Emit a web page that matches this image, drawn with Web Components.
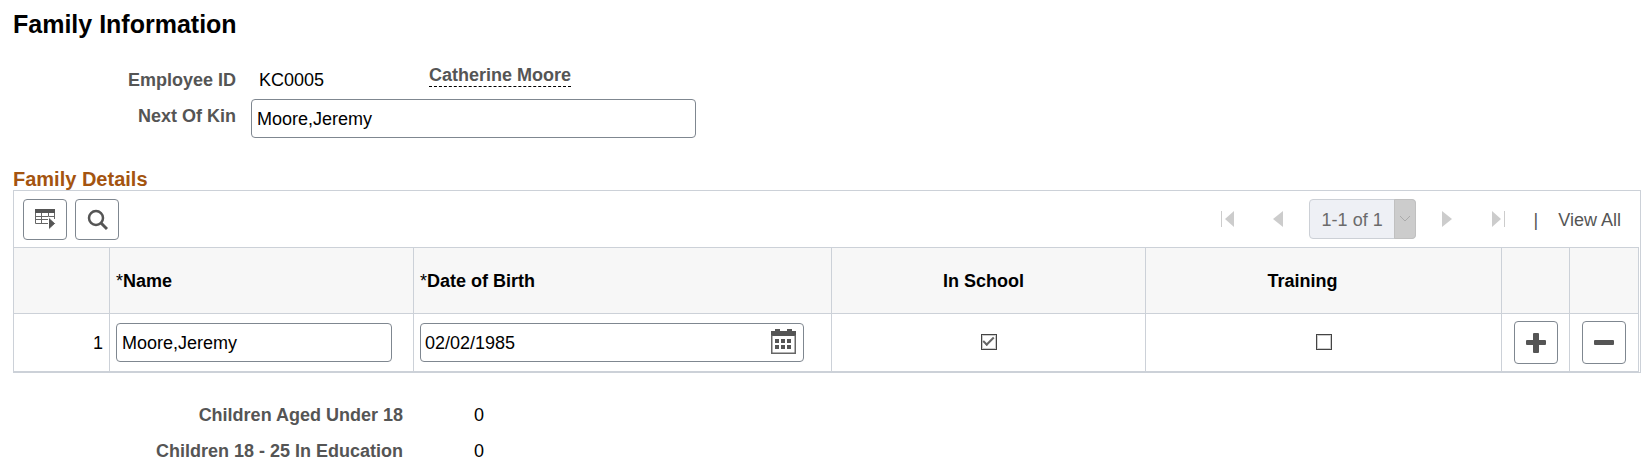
<!DOCTYPE html>
<html lang="en">
<head>
<meta charset="utf-8">
<title>Family Information</title>
<style>
  body {
    margin: 0;
    background: #fff;
    color: #000;
    font: 18px/36px "Liberation Sans", Arial, sans-serif;
  }
</style>
</head>
<body>
<family-page>
  <info-field label="Employee ID" text="KC0005">
    <person-link>Catherine Moore</person-link>
  </info-field>
  <info-field label="Next Of Kin" value="Moore,Jeremy"></info-field>
  <detail-grid slot="details" heading="Family Details">
    <tool-button slot="tools" icon="actions" label="Grid actions"></tool-button>
    <tool-button slot="tools" icon="search" label="Find"></tool-button>
    <grid-pager slot="pager"></grid-pager>
  </detail-grid>
  <info-field slot="totals" class="total" label="Children Aged Under 18" text="0"></info-field>
  <info-field slot="totals" class="total" label="Children 18 - 25 In Education" text="0"></info-field>
</family-page>

<script>
const icons = {
  actions: `<svg width="21" height="21" viewBox="0 0 21 21">
    <path fill="#555" d="M0 0h20v4H0z"/>
    <path fill="none" stroke="#666" d="M.5 4v10.500H14M.5 7.500h19M.5 10.500H14M6.500 4v10M13.500 4v6M19.500 4v6"/>
    <path fill="#555" stroke="#fff" d="M13.500 8l7 6.500-7 6.500z"/>
  </svg>`,
  search: `<svg width="22" height="22" viewBox="0 0 22 22" fill="none" stroke="#555">
    <circle cx="10" cy="9" r="7" stroke-width="2.500"/>
    <path stroke-width="3" d="M15 14l6 6"/>
  </svg>`,
  add: `<svg width="20" height="20" viewBox="0 0 20 20" fill="#555">
    <rect x="0" y="7" width="20" height="5" rx="1"/>
    <rect x="7" y="0" width="6" height="20" rx="1"/>
  </svg>`,
  remove: `<svg width="20" height="20" viewBox="0 0 20 20" fill="#555">
    <rect x="0" y="7" width="20" height="5" rx="1"/>
  </svg>`,
  calendar: `<svg width="25" height="25" viewBox="0 0 25 25">
    <path fill="#555" d="M0 2h4V0h5v2h7V0h5v2h4v5H0z"/>
    <path fill="none" stroke="#666" stroke-width="1.500" d="M.75 6v18.250h23.500V6"/>
    <path fill="#555" d="M4 10h4v4H4zM10 10h4v4h-4zM16 10h4v4h-4zM4 16h4v4H4zM10 16h4v4h-4zM16 16h4v4h-4z"/>
  </svg>`
}

const boxStyle = `
  input[type=text] {
    box-sizing: border-box;
    height: 39px;
    margin: 0;
    padding: 2px 5px 0;
    border: 1px solid #7f8790;
    border-radius: 4px;
    background: #fff;
    color: #000;
    font: inherit;
  }
`

class FamilyPage extends HTMLElement {
  constructor() {
    super()
    this.attachShadow({ mode: 'open' }).innerHTML = `
      <style>
        :host {
          display: block;
          padding: 9px 10px 0 13px;
        }

        h1 {
          margin: 0 0 23px;
          font-size: 25px;
          line-height: 30px;
        }

        .details {
          margin: 30px 0 24px;
        }
      </style>
      <h1>Family Information</h1>
      <section><slot></slot></section>
      <section class="details"><slot name="details"></slot></section>
      <section><slot name="totals"></slot></section>
    `
  }
}

// a label with either plain text or an edit box after it
class InfoField extends HTMLElement {
  constructor() {
    super()
    this.attachShadow({ mode: 'open' }).innerHTML = `
      <style>
        :host {
          display: grid;
          grid-template-columns: 223px 1fr;
          column-gap: 15px;
          min-height: 36px;
        }

        :host(.total) {
          grid-template-columns: 390px 1fr;
          column-gap: 63px;
        }

        label, .label {
          color: #555;
          font-weight: bold;
          text-align: right;
        }

        .content {
          display: flex;
          align-items: flex-start;
        }

        .text {
          width: 170px;
          padding-left: 8px;
        }

        ${boxStyle}

        input[type=text] {
          width: 445px;
          margin-top: 1px;
        }
      </style>
    `
    const name = this.getAttribute('label')
    if (this.hasAttribute('value')) {
      this.shadowRoot.innerHTML += `
        <label for="box">${name}</label>
        <div class="content"><input id="box" type="text" value="${this.getAttribute('value')}"></div>
      `
    } else {
      this.shadowRoot.innerHTML += `
        <span class="label">${name}</span>
        <div class="content"><span class="text">${this.getAttribute('text')}</span><slot></slot></div>
      `
    }
  }
}

class PersonLink extends HTMLElement {
  constructor() {
    super()
    this.attachShadow({ mode: 'open' }).innerHTML = `
      <style>
        :host {
          display: block;
        }

        a {
          display: block;
          padding-top: 2px;
          border-bottom: 1px dashed #000;
          color: #555;
          font-weight: bold;
          line-height: 22px;
          text-decoration: none;
        }
      </style>
      <a href="#"><slot></slot></a>
    `
  }
}

class ToolButton extends HTMLElement {
  constructor() {
    super()
    this.attachShadow({ mode: 'open' }).innerHTML = `
      <style>
        :host {
          display: inline-block;
          vertical-align: top;
          width: 44px;
          height: 41px;
        }

        button {
          display: flex;
          align-items: center;
          justify-content: center;
          box-sizing: border-box;
          width: 100%;
          height: 100%;
          padding: 0;
          border: 1px solid #7f8790;
          border-radius: 4px;
          background: #fff;
          cursor: pointer;
        }
      </style>
      <button type="button" aria-label="${this.getAttribute('label')}">${icons[this.getAttribute('icon')]}</button>
    `
  }
}

class GridPager extends HTMLElement {
  constructor() {
    super()
    this.attachShadow({ mode: 'open' }).innerHTML = `
      <style>
        :host {
          display: flex;
          align-items: center;
          height: 39px;
        }

        button {
          display: flex;
          padding: 0;
          border: 0;
          background: none;
        }

        svg {
          display: block;
          fill: #ccc;
        }

        .previous {
          margin: 0 26px 0 39px;
        }

        .next {
          margin: 0 40px 0 26px;
        }

        .range {
          display: grid;
          grid-template-columns: 85px 22px;
          height: 39px;
        }

        select {
          grid-area: 1 / 1 / 2 / 3;
          appearance: none;
          box-sizing: border-box;
          width: 100%;
          margin: 0;
          padding: 2px 0 0 12px;
          border: 1px solid #ccd0d6;
          border-radius: 4px;
          background: #eef0f5;
          color: #6b6b6b;
          font: inherit;
          opacity: 1;
        }

        .arrow {
          grid-area: 1 / 2;
          display: grid;
          place-items: center;
          border: 1px solid #c0c0c0;
          border-radius: 0 4px 4px 0;
          background: #ccc;
          pointer-events: none;
        }

        .arrow svg {
          fill: none;
          stroke: #aaa;
          stroke-width: 1;
        }

        .bar {
          margin: 0 20px 0 29px;
          color: #555;
        }

        a {
          color: #555;
          text-decoration: none;
        }

        .bar, a {
          padding-top: 2px;
        }
      </style>
      <button type="button" disabled aria-label="First row">
        <svg width="13" height="16"><path d="M0 0h1v16H0zM13 0v16L4 8z"/></svg>
      </button>
      <button type="button" disabled class="previous" aria-label="Previous row">
        <svg width="10" height="16"><path d="M10 0v16L0 8z"/></svg>
      </button>
      <div class="range">
        <select disabled aria-label="Rows"><option>1-1 of 1</option></select>
        <span class="arrow"><svg width="12" height="8"><path d="M1 1l5 5 5-5"/></svg></span>
      </div>
      <button type="button" disabled class="next" aria-label="Next row">
        <svg width="10" height="16"><path d="M0 0v16l10-8z"/></svg>
      </button>
      <button type="button" disabled aria-label="Last row">
        <svg width="13" height="16"><path d="M12 0h1v16h-1zM0 0v16l9-8z"/></svg>
      </button>
      <span class="bar">|</span>
      <a href="#">View All</a>
    `
  }
}

class DateBox extends HTMLElement {
  constructor() {
    super()
    this.attachShadow({ mode: 'open' }).innerHTML = `
      <style>
        :host {
          display: flex;
          align-items: center;
          box-sizing: border-box;
          height: 39px;
          border: 1px solid #7f8790;
          border-radius: 4px;
        }

        input {
          flex: 1;
          min-width: 0;
          padding: 0 4px;
          border: 0;
          background: none;
          font: inherit;
          line-height: 24px;
        }

        button {
          display: flex;
          margin: 0 7px 2px 0;
          padding: 0;
          border: 0;
          background: none;
        }
      </style>
      <input type="text" aria-label="Date of Birth" value="${this.getAttribute('value')}">
      <button type="button" aria-label="Choose a date">${icons.calendar}</button>
    `
  }
}

class DetailGrid extends HTMLElement {
  constructor() {
    super()
    this.attachShadow({ mode: 'open' }).innerHTML = `
      <style>
        :host {
          display: block;
        }

        h2 {
          margin: 0;
          color: #a4540f;
          font-size: 20px;
          line-height: 22px;
        }

        .frame {
          border: 1px solid #ccd1d8;
        }

        .toolbar {
          display: flex;
          justify-content: space-between;
          padding: 8px 19px 7px 9px;
        }

        .tools {
          display: flex;
          gap: 8px;
        }

        .scroll {
          padding-right: 1px;
        }

        table {
          width: 100%;
          table-layout: fixed;
          border-spacing: 0;
        }

        th, td {
          box-sizing: border-box;
          padding: 0 6px;
          border-right: 1px solid #ccd1d8;
          border-bottom: 1px solid #ccd1d8;
          text-align: left;
        }

        th {
          height: 67px;
          border-top: 1px solid #ccd1d8;
          background: #f7f7f7;
        }

        th span {
          font-weight: normal;
        }

        td {
          height: 58px;
        }

        .number {
          text-align: right;
        }

        .center {
          padding: 0;
          text-align: center;
        }

        th.school {
          padding-right: 10px;
        }

        th.training {
          padding-right: 42px;
        }

        ${boxStyle}

        td input[type=text] {
          display: block;
          width: calc(100% - 15px);
        }

        date-box {
          width: calc(100% - 21px);
        }

        input[type=checkbox] {
          appearance: none;
          display: inline-grid;
          place-items: center;
          box-sizing: border-box;
          width: 16px;
          height: 16px;
          margin: 0 0 4px;
          border: 1px solid #444;
          outline: 1px solid #ccc;
          outline-offset: -2px;
          vertical-align: middle;
        }

        input[type=checkbox]:checked::before {
          content: "";
          width: 9px;
          height: 4px;
          margin-bottom: 3px;
          border: solid #666;
          border-width: 0 0 2px 2px;
          transform: rotate(-45deg);
        }

        tool-button {
          display: block;
          height: 43px;
          margin: auto;
        }
      </style>
      <h2>${this.getAttribute('heading')}</h2>
      <div class="frame">
        <div class="toolbar">
          <div class="tools"><slot name="tools"></slot></div>
          <slot name="pager"></slot>
        </div>
        <div class="scroll">
          <table>
            <colgroup>
              <col style="width: 96px">
              <col style="width: 304px">
              <col style="width: 418px">
              <col style="width: 314px">
              <col style="width: 356px">
              <col style="width: 68px">
              <col style="width: 69px">
            </colgroup>
            <thead>
              <tr>
                <th></th>
                <th><span>*</span>Name</th>
                <th><span>*</span>Date of Birth</th>
                <th class="center school">In School</th>
                <th class="center training">Training</th>
                <th></th>
                <th></th>
              </tr>
            </thead>
            <tbody>
              <tr>
                <td class="number">1</td>
                <td><input type="text" aria-label="Name" value="Moore,Jeremy"></td>
                <td><date-box value="02/02/1985"></date-box></td>
                <td class="center"><input type="checkbox" aria-label="In School" checked></td>
                <td class="center"><input type="checkbox" aria-label="Training"></td>
                <td class="center"><tool-button icon="add" label="Add row"></tool-button></td>
                <td class="center"><tool-button icon="remove" label="Delete row"></tool-button></td>
              </tr>
            </tbody>
          </table>
        </div>
      </div>
    `
  }
}

window.customElements.define('family-page', FamilyPage)
window.customElements.define('info-field', InfoField)
window.customElements.define('person-link', PersonLink)
window.customElements.define('tool-button', ToolButton)
window.customElements.define('grid-pager', GridPager)
window.customElements.define('date-box', DateBox)
window.customElements.define('detail-grid', DetailGrid)
</script>
</body>
</html>
